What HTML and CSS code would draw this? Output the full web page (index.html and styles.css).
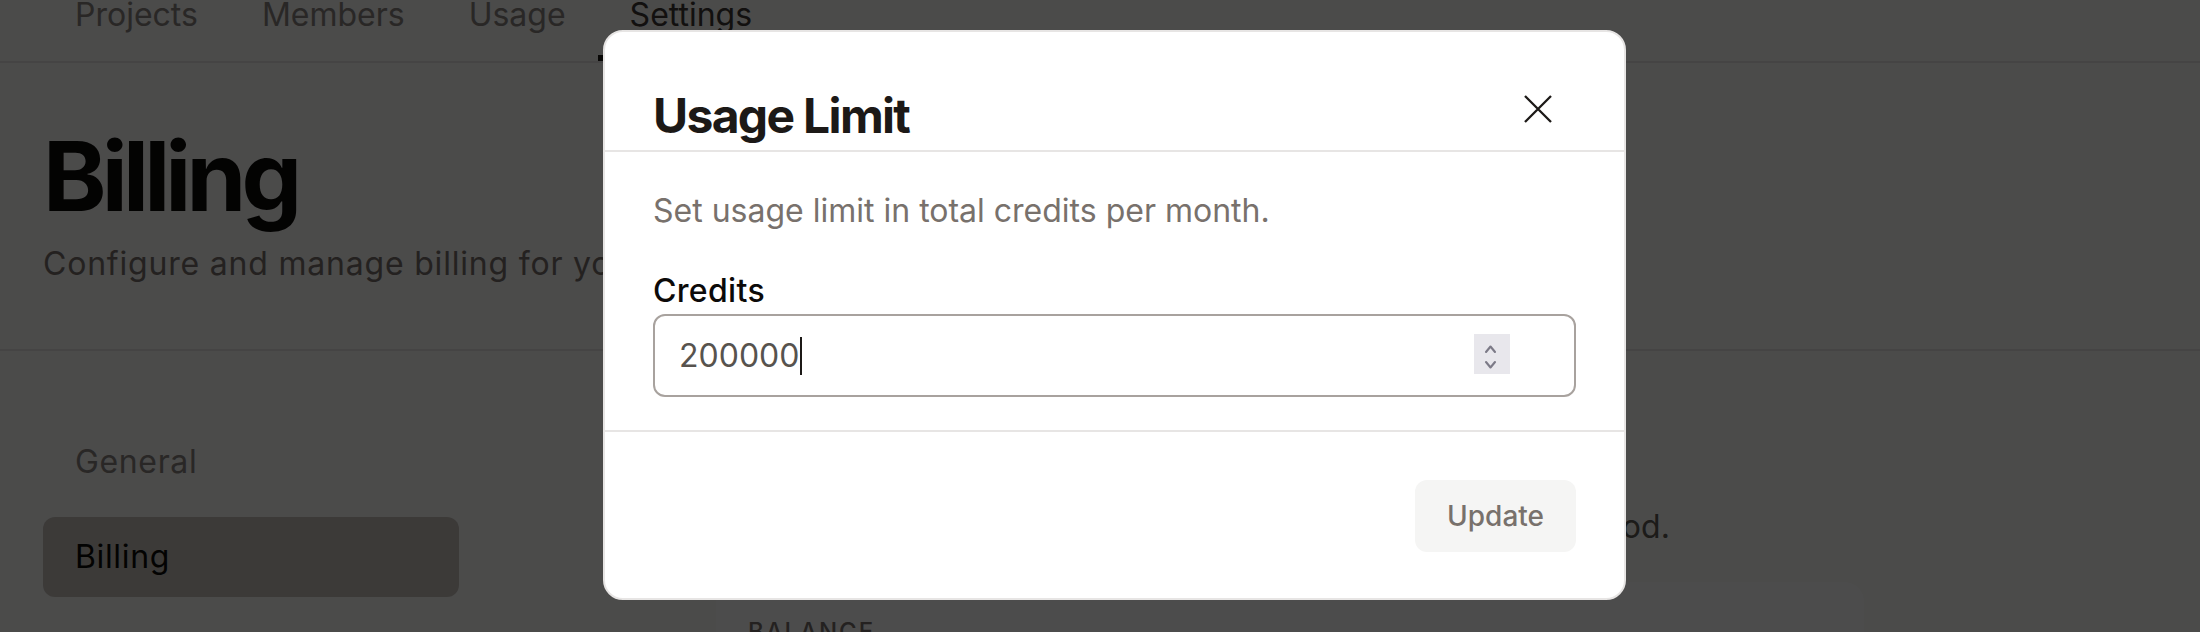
FILE: index.html
```html
<!DOCTYPE html>
<html lang="en">
<head>
<meta charset="utf-8">
<title>Billing – Usage Limit</title>
<link rel="stylesheet" href="styles.css">
</head>
<body>
<div class="page">
  <nav class="tabs">
    <a class="tab" href="#">Projects</a>
    <a class="tab" href="#">Members</a>
    <a class="tab" href="#">Usage</a>
    <a class="tab active" href="#">Settings</a>
  </nav>
  <header class="page-header">
    <h1>Billing</h1>
    <p>Configure and manage billing for your organization.</p>
  </header>
  <div class="layout">
    <aside class="sidebar">
      <a class="side-item" href="#">General</a>
      <a class="side-item active" href="#">Billing</a>
    </aside>
    <main class="main">
      <h2>Usage limit</h2>
      <p>Set a limit on the credits your teams can use per billing period.</p>
      <section class="card">
        <div class="card-label">Balance</div>
        <div class="card-value">$0.00</div>
      </section>
    </main>
  </div>
</div>

<div class="overlay">
  <div class="modal" role="dialog" aria-label="Usage Limit">
    <div class="modal-header">
      <h2>Usage Limit</h2>
      <button class="close" aria-label="Close">
        <svg width="28" height="28" viewBox="0 0 28 28"><path d="M1 1 L27 27 M27 1 L1 27" stroke="#1c1917" stroke-width="2.3" fill="none"/></svg>
      </button>
    </div>
    <div class="modal-body">
      <p class="modal-desc">Set usage limit in total credits per month.</p>
      <label class="field-label">Credits</label>
      <div class="input">
        <span class="value">200000</span><span class="caret"></span>
        <svg class="spinner" width="36" height="40" viewBox="0 0 36 40"><rect width="36" height="40" fill="#e8e7ec"/><path d="M12 18 L16.5 12.5 L21 18 M12 28 L16.5 33.5 L21 28" stroke="#7c7a87" stroke-width="2.1" fill="none" stroke-linecap="round" stroke-linejoin="round"/></svg>
      </div>
    </div>
    <div class="modal-footer">
      <button class="btn">Update</button>
    </div>
  </div>
</div>
</body>
</html>
```

FILE: styles.css
```css
html, body {
  margin: 0;
  padding: 0;
}
body {
  font-family: Inter, "Noto Sans", "Liberation Sans", sans-serif;
  background: #fafaf9;
  width: 2200px;
  height: 632px;
  overflow: hidden;
}

/* Tabs */
.tabs {
  display: flex;
  padding-left: 43px;
  border-bottom: 2px solid #e7e5e4;
}
.tab {
  padding: 0 32px 31px;
  font-size: 32px;
  line-height: 30px;
  color: #8a847f;
  text-decoration: none;
}
.tab.active {
  color: #3c3835;
  box-shadow: inset 0 -6px 0 #1c1917;
}

/* Page header */
.page-header {
  padding: 65px 43px 63px;
  border-bottom: 2px solid #e7e5e4;
}
.page-header h1 {
  margin: 0 0 17px;
  font-size: 96px;
  line-height: 96px;
  font-weight: 700;
  letter-spacing: -0.05em;
  color: #0c0a09;
}
.page-header p {
  margin: 0;
  font-size: 32px;
  line-height: 45px;
  letter-spacing: 0.025em;
  color: #78716c;
}

/* Layout */
.layout {
  display: grid;
  grid-template-columns: 416px 1148px;
  column-gap: 257px;
  padding: 71px 43px 0;
}
.sidebar {
  display: flex;
  flex-direction: column;
  gap: 15px;
}
.side-item {
  height: 80px;
  line-height: 80px;
  padding: 0 32px;
  border-radius: 12px;
  font-size: 32px;
  letter-spacing: 0.02em;
  color: #8a847f;
  text-decoration: none;
}
.side-item.active {
  background: #c9c3bd;
  color: #0c0a09;
}
.main h2 {
  margin: 0 0 22px;
  font-size: 40px;
  line-height: 60px;
  font-weight: 700;
  color: #0c0a09;
}
.main p {
  margin: 0 0 33px;
  font-size: 32px;
  line-height: 45px;
  letter-spacing: 0.006em;
  color: #5f5a55;
}
.card {
  background: #fff;
  border-radius: 20px;
  padding: 32px;
  min-height: 300px;
}
.card-label {
  font-size: 24px;
  line-height: 36px;
  font-weight: 500;
  letter-spacing: 0.08em;
  text-transform: uppercase;
  color: #78716c;
}
.card-value {
  font-size: 48px;
  font-weight: 700;
  color: #0c0a09;
}

/* Modal */
.overlay {
  position: fixed;
  inset: 0;
  background: rgba(0, 0, 0, 0.7);
}
.modal {
  position: absolute;
  left: 603px;
  top: 30px;
  width: 1023px;
  box-sizing: border-box;
  background: #fff;
  border: 2px solid #e7e5e4;
  border-radius: 20px;
}
.modal-header {
  display: flex;
  justify-content: space-between;
  align-items: flex-start;
  padding: 50px 72px 0 48px;
  border-bottom: 2px solid #e7e5e4;
}
.modal-header h2 {
  margin: 0;
  font-size: 48px;
  line-height: 68px;
  font-weight: 700;
  letter-spacing: -0.035em;
  color: #1c1917;
}
.close {
  margin-top: 13px;
  width: 28px;
  height: 28px;
  padding: 0;
  border: 0;
  background: none;
  display: block;
}
.close svg {
  display: block;
}
.modal-body {
  padding: 36px 48px 33px;
  border-bottom: 2px solid #e7e5e4;
}
.modal-desc {
  margin: 0 0 35px;
  font-size: 32px;
  line-height: 45px;
  color: #78716c;
}
.field-label {
  display: block;
  margin-bottom: 1px;
  font-size: 32px;
  line-height: 45px;
  font-weight: 500;
  letter-spacing: 0.01em;
  color: #0c0a09;
}
.input {
  display: flex;
  align-items: center;
  height: 83px;
  box-sizing: border-box;
  border: 2px solid #a8a29e;
  border-radius: 12px;
  padding: 0 64px 0 24px;
}
.value {
  font-size: 32px;
  color: #57534e;
}
.caret {
  width: 2px;
  height: 38px;
  margin-left: 1px;
  background: #1c1917;
}
.spinner {
  display: block;
  margin-left: auto;
  margin-top: -4px;
}
.modal-footer {
  display: flex;
  justify-content: flex-end;
  padding: 48px 48px 46px;
}
.btn {
  height: 72px;
  padding: 0 32px;
  border: 0;
  border-radius: 12px;
  background: #f5f5f4;
  color: #78716c;
  font-family: Inter, "Noto Sans", sans-serif;
  font-size: 28px;
  font-weight: 500;
}
```
